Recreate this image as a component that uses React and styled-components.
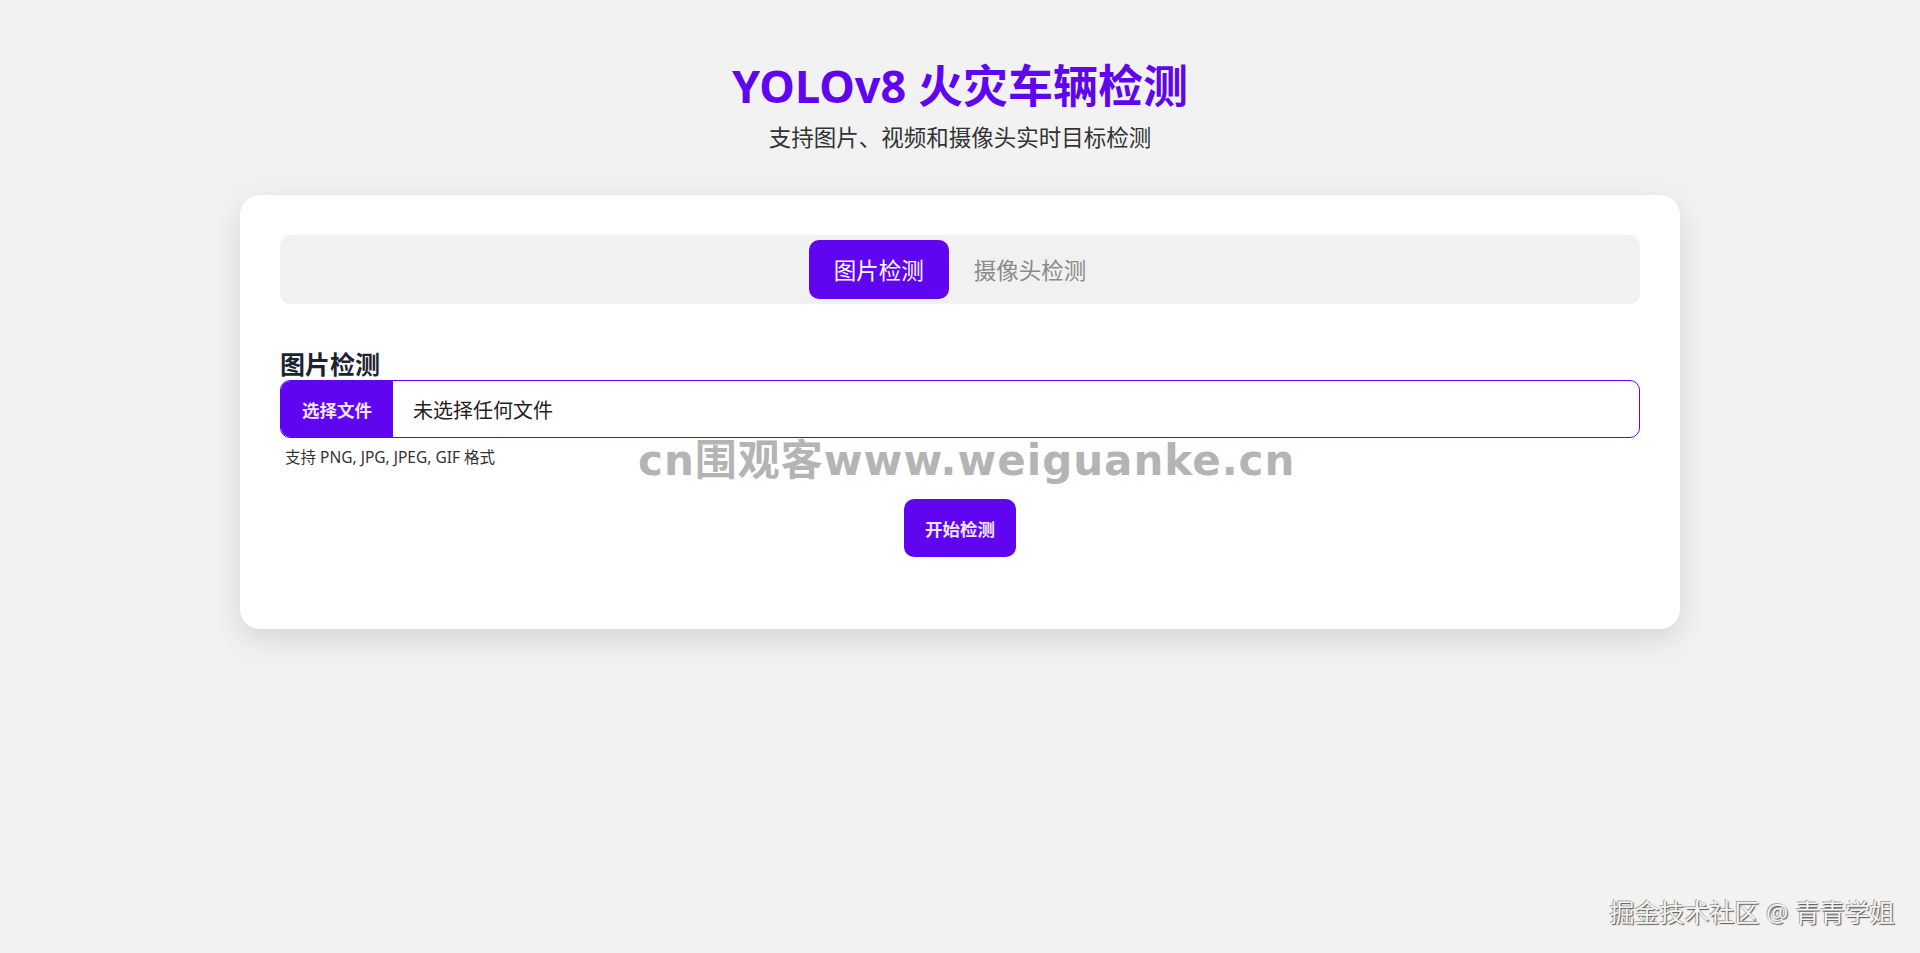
import styled, { createGlobalStyle } from 'styled-components'

const GlobalStyle = createGlobalStyle`
  html, body {
    margin: 0;
    padding: 0;
    background: #f2f2f2;
    font-family: "Noto Sans", "Noto Sans CJK SC", sans-serif;
  }
`

const PRIMARY = '#6005f0'

const Page = styled.div`
  position: relative;
  min-height: 953px;
  padding-top: 59px;
  box-sizing: border-box;
  display: flex;
  flex-direction: column;
  align-items: center;
`

const Title = styled.h1`
  margin: 0;
  font-size: 45px;
  line-height: 54px;
  font-weight: 700;
  color: ${PRIMARY};
`

const Subtitle = styled.p`
  margin: 8px 0 0;
  font-size: 22.5px;
  line-height: 33px;
  color: #333;
`

const Card = styled.div`
  margin-top: 41px;
  width: 1440px;
  box-sizing: border-box;
  background: #fff;
  border-radius: 20px;
  padding: 40px;
  box-shadow: 0 10px 30px rgba(0, 0, 0, 0.12);
`

const TabBar = styled.div`
  display: flex;
  justify-content: center;
  padding: 5px;
  background: #f1f1f1;
  border-radius: 10px;
`

const Tab = styled.button`
  height: 59px;
  padding: 0 25px;
  border: none;
  border-radius: 10px;
  font-family: inherit;
  font-size: 22.5px;
  cursor: pointer;
  background: ${({ $active }) => ($active ? PRIMARY : 'transparent')};
  color: ${({ $active }) => ($active ? '#fff' : '#8a8a8a')};
`

const Section = styled.div`
  margin-top: 44px;
`

const SectionTitle = styled.h2`
  margin: 0;
  font-size: 25px;
  line-height: 32px;
  font-weight: 700;
  color: #1c2433;
`

const FileField = styled.label`
  display: flex;
  align-items: stretch;
  height: 58px;
  box-sizing: border-box;
  border: 1px solid ${PRIMARY};
  border-radius: 10px;
  overflow: hidden;
  cursor: pointer;

  input {
    display: none;
  }
`

const FileButton = styled.span`
  width: 112px;
  display: flex;
  align-items: center;
  justify-content: center;
  background: ${PRIMARY};
  color: #f1e6ff;
  font-size: 17.5px;
  font-weight: 700;
`

const FileName = styled.span`
  display: flex;
  align-items: center;
  padding-left: 20px;
  font-size: 20px;
  color: #222;
`

const Hint = styled.p`
  margin: 9px 0 0 5px;
  font-size: 15.5px;
  line-height: 21px;
  color: #333;
`

const Actions = styled.div`
  display: flex;
  justify-content: center;
  margin-top: 31px;
  margin-bottom: 32px;
`

const StartButton = styled.button`
  height: 58px;
  padding: 0 21px;
  border: none;
  border-radius: 10px;
  background: ${PRIMARY};
  color: #f1e6ff;
  font-family: inherit;
  font-size: 17.5px;
  font-weight: 700;
  cursor: pointer;
`

const Watermark = styled.div`
  position: absolute;
  left: 638px;
  top: 426px;
  font-family: "DejaVu Sans", "Noto Sans CJK SC", sans-serif;
  font-size: 42px;
  font-weight: 700;
  letter-spacing: 1px;
  color: #b4b4b4;
  pointer-events: none;
  white-space: nowrap;
`

const Credit = styled.div`
  position: absolute;
  right: 25px;
  bottom: 24px;
  font-size: 25px;
  color: #f4f4f4;
  text-shadow: 1px 1px 1px #555, -1px -1px 0 #aaa;
  white-space: nowrap;
`

export default function App() {
  const tabs = ['图片检测', '摄像头检测']

  return (<>
    <GlobalStyle />
    <Page>
      <Title>YOLOv8 火灾车辆检测</Title>
      <Subtitle>支持图片、视频和摄像头实时目标检测</Subtitle>

      <Card>
        <TabBar>
          {tabs.map((t, i) => (
            <Tab key={t} $active={i === 0}>{t}</Tab>
          ))}
        </TabBar>

        <Section>
          <SectionTitle>图片检测</SectionTitle>
          <FileField>
            <input type="file" accept="image/*" />
            <FileButton>选择文件</FileButton>
            <FileName>未选择任何文件</FileName>
          </FileField>
          <Hint>支持 PNG, JPG, JPEG, GIF 格式</Hint>
          <Actions>
            <StartButton>开始检测</StartButton>
          </Actions>
        </Section>
      </Card>

      <Watermark>cn围观客www.weiguanke.cn</Watermark>
      <Credit>掘金技术社区 @ 青青学姐</Credit>
    </Page>
  </>)
}
